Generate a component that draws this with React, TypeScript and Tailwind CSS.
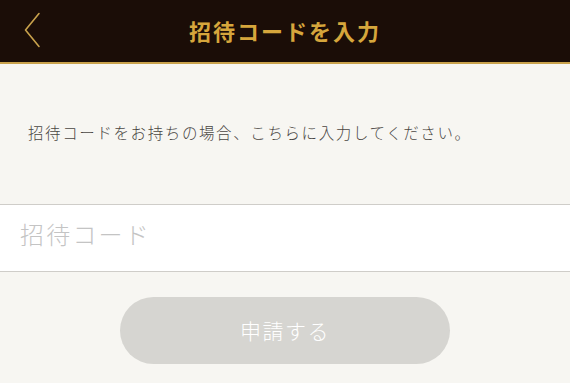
export default function App() {
  return (
    <div
      className="w-[570px] h-[383px] bg-[#f7f6f2] overflow-hidden"
      style={{ fontFamily: '"Noto Sans CJK JP", "Noto Sans", sans-serif' }}
    >
      <header className="relative h-[64px] bg-[#1b0d07] border-b-2 border-[#c9a24c] flex items-center justify-center">
        <button className="absolute left-[22px] top-[12px] w-[20px] h-[36px] flex items-center justify-center">
          <svg width="18" height="36" viewBox="0 0 18 36" fill="none">
            <path d="M16 1.5 L2.5 18 L16 34.5" stroke="#c9a24c" strokeWidth="1.6" strokeLinecap="round" strokeLinejoin="round" />
          </svg>
        </button>
        <h1 className="text-[22px] font-bold text-[#d6a63c] tracking-[2px] leading-none mt-[-2px]">招待コードを入力</h1>
      </header>

      <p className="pl-[28px] pt-[57px] text-[15.5px] leading-[22px] text-[#4a4643] font-light tracking-[1.6px]">
        招待コードをお持ちの場合、こちらに入力してください。
      </p>

      <div className="mt-[61px] h-[68px] bg-white border-y border-[#cfcdc9] flex items-center pb-[9px]">
        <input
          className="w-full pl-[20px] text-[24px] leading-[30px] font-light tracking-[2.2px] text-[#333] placeholder:text-[#c4c4c4] outline-none bg-transparent"
          placeholder="招待コード"
        />
      </div>

      <div className="flex justify-center pt-[25px]">
        <button className="w-[330px] h-[67px] rounded-full bg-[#d6d5d1] text-white text-[21px] font-light tracking-[1.5px]">
          申請する
        </button>
      </div>
    </div>
  );
}
